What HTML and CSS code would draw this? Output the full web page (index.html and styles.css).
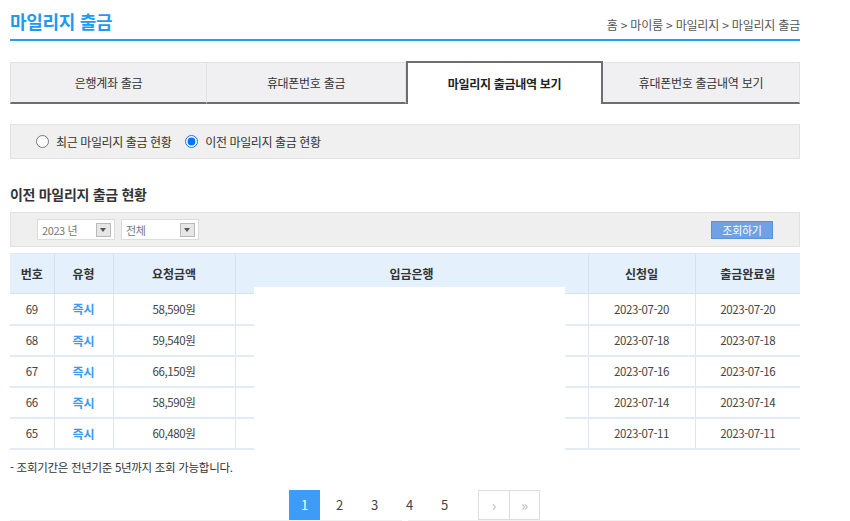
FILE: index.html
```html
<!DOCTYPE html>
<html lang="ko">
<head>
<meta charset="utf-8">
<title>마일리지 출금</title>
<link rel="stylesheet" href="styles.css">
</head>
<body>
<div class="page">
  <header class="top">
    <h1 class="title">마일리지 출금</h1>
    <div class="crumb">홈 &gt; 마이룸 &gt; 마일리지 &gt; 마일리지 출금</div>
  </header>

  <ul class="tabs">
    <li class="tab">은행계좌 출금</li>
    <li class="tab">휴대폰번호 출금</li>
    <li class="tab active">마일리지 출금내역 보기</li>
    <li class="tab">휴대폰번호 출금내역 보기</li>
  </ul>

  <div class="radios">
    <label class="radio"><input type="radio" name="period">최근 마일리지 출금 현황</label>
    <label class="radio"><input type="radio" name="period" checked>이전 마일리지 출금 현황</label>
  </div>

  <h2 class="section">이전 마일리지 출금 현황</h2>

  <div class="filter">
    <div class="sel"><span>2023 년</span><i class="arrow"></i></div>
    <div class="sel"><span>전체</span><i class="arrow"></i></div>
    <button class="search" type="button">조회하기</button>
  </div>

  <div class="table-wrap">
    <table class="list">
      <colgroup>
        <col class="c-no"><col class="c-type"><col class="c-amt"><col class="c-bank"><col class="c-req"><col class="c-done">
      </colgroup>
      <thead>
        <tr><th>번호</th><th>유형</th><th>요청금액</th><th>입금은행</th><th>신청일</th><th>출금완료일</th></tr>
      </thead>
      <tbody>
        <tr><td>69</td><td class="type">즉시</td><td>58,590원</td><td></td><td>2023-07-20</td><td>2023-07-20</td></tr>
        <tr><td>68</td><td class="type">즉시</td><td>59,540원</td><td></td><td>2023-07-18</td><td>2023-07-18</td></tr>
        <tr><td>67</td><td class="type">즉시</td><td>66,150원</td><td></td><td>2023-07-16</td><td>2023-07-16</td></tr>
        <tr><td>66</td><td class="type">즉시</td><td>58,590원</td><td></td><td>2023-07-14</td><td>2023-07-14</td></tr>
        <tr><td>65</td><td class="type">즉시</td><td>60,480원</td><td></td><td>2023-07-11</td><td>2023-07-11</td></tr>
      </tbody>
    </table>
    <div class="mask"></div>
  </div>

  <p class="note">- 조회기간은 전년기준 5년까지 조회 가능합니다.</p>

  <div class="paging">
    <span class="pg on">1</span>
    <span class="pg">2</span>
    <span class="pg">3</span>
    <span class="pg">4</span>
    <span class="pg">5</span>
    <span class="pg-box first">&#8250;</span>
    <span class="pg-box">&#187;</span>
  </div>

  <div class="bottom">
    <div class="bottom-box"></div>
    <div class="bottom-box"></div>
  </div>
</div>
</body>
</html>
```

FILE: styles.css
```css
* { box-sizing: border-box; }

html, body {
  margin: 0;
  padding: 0;
  background: #fff;
  overflow: hidden;
}

body {
  font-family: "Noto Sans CJK KR", "Noto Sans", sans-serif;
  color: #333;
  font-size: 12px;
}

.page {
  width: 790px;
  margin-left: 10px;
}

/* header */
.top {
  display: flex;
  justify-content: space-between;
  align-items: flex-end;
  height: 41px;
  padding-bottom: 6px;
  border-bottom: 2px solid #22a0f4;
}

.title {
  margin: 0;
  font-size: 18px;
  line-height: 24px;
  font-weight: 700;
  color: #1e9af0;
  letter-spacing: -0.3px;
}

.crumb {
  font-size: 12px;
  line-height: 16px;
  color: #555;
  letter-spacing: -0.2px;
}

/* tabs */
.tabs {
  list-style: none;
  margin: 20px 0 0;
  padding: 0;
  display: grid;
  grid-template-columns: 197px 199px 197px 197px;
  height: 42px;
  align-items: end;
}

.tab {
  height: 42px;
  display: flex;
  align-items: center;
  justify-content: center;
  background: #f0f0f2;
  border-top: 1px solid #e2e2e4;
  border-right: 1px solid #e2e2e4;
  border-bottom: 2px solid #6e6e6e;
  color: #333;
  font-size: 12px;
  letter-spacing: -0.3px;
}

.tab:first-child { border-left: 1px solid #e2e2e4; }

.tab.active {
  height: 43px;
  background: #fff;
  border: 2px solid #6e6e6e;
  border-bottom: none;
  font-weight: 700;
  color: #222;
}

/* radios */
.radios {
  margin-top: 21px;
  height: 35px;
  background: #f0f0f0;
  border: 1px solid #e2e2e2;
  display: flex;
  align-items: center;
  padding-left: 25px;
  gap: 14px;
}

.radio {
  display: flex;
  align-items: center;
  font-size: 12px;
  color: #333;
  letter-spacing: -0.4px;
}

.radio input {
  margin: 0 7px 0 0;
  width: 13px;
  height: 13px;
}

/* section heading */
.section {
  margin: 25px 0 0;
  font-size: 14px;
  line-height: 20px;
  font-weight: 700;
  color: #333;
  letter-spacing: -0.3px;
}

/* filter bar */
.filter {
  margin-top: 8px;
  height: 35px;
  background: #efefef;
  border: 1px solid #e2e2e2;
  display: flex;
  align-items: center;
  padding: 0 26px;
  gap: 6px;
}

.sel {
  width: 78px;
  height: 21px;
  background: #fff;
  border: 1px solid #dcdcdc;
  display: flex;
  align-items: center;
  justify-content: space-between;
  padding: 0 3px 0 4px;
  font-size: 11px;
  color: #777;
  letter-spacing: -0.4px;
}

.arrow {
  width: 15px;
  height: 14px;
  background: #e6e6e6;
  border: 1px solid #b9b9b9;
  position: relative;
}

.arrow::after {
  content: "";
  position: absolute;
  left: 3px;
  top: 4px;
  border-left: 3.5px solid transparent;
  border-right: 3.5px solid transparent;
  border-top: 4px solid #555;
}

.search {
  margin-left: auto;
  width: 62px;
  height: 18px;
  padding: 0;
  border: 1px solid #5b8fd8;
  background: #6ea1e6;
  color: #fff;
  font-family: "Noto Sans CJK KR", sans-serif;
  font-size: 11px;
  line-height: 16px;
  letter-spacing: -0.3px;
}

/* table */
.table-wrap {
  position: relative;
  margin-top: 6px;
}

.list {
  width: 790px;
  border-collapse: collapse;
  table-layout: fixed;
  border-top: 1px solid #d9e6f7;
}

.c-no { width: 44px; }
.c-type { width: 59px; }
.c-amt { width: 122px; }
.c-bank { width: 353px; }
.c-req { width: 107px; }
.c-done { width: 105px; }

.list th {
  height: 40px;
  background: #e5f0fd;
  font-size: 12px;
  font-weight: 700;
  color: #333;
  border-left: 1px solid #d5e2f3;
  border-bottom: 1px solid #d5e2f3;
  padding: 0;
}

.list td {
  height: 31px;
  text-align: center;
  font-size: 11.5px;
  color: #444;
  border-left: 1px solid #dce7f5;
  border-bottom: 2px solid #e2ebf7;
  padding: 0;
  letter-spacing: -0.4px;
}

.list th:first-child,
.list td:first-child { border-left: none; }

.list td.type {
  color: #3a9af2;
  font-weight: 700;
  font-size: 12px;
  letter-spacing: 0;
}

.mask {
  position: absolute;
  left: 244px;
  top: 34px;
  width: 311px;
  height: 164px;
  background: #fff;
}

/* note */
.note {
  margin: 9px 0 0;
  font-size: 11.5px;
  line-height: 16px;
  color: #333;
  letter-spacing: -0.3px;
}

/* pagination */
.paging {
  margin-top: 15px;
  display: flex;
  align-items: stretch;
  height: 30px;
  padding-left: 279px;
}

.pg {
  width: 31px;
  margin-right: 4px;
  display: flex;
  align-items: center;
  justify-content: center;
  font-size: 13px;
  color: #444;
}

.pg.on {
  background: #3f9cf6;
  color: #fff;
}

.pg-box {
  width: 31px;
  display: flex;
  align-items: center;
  justify-content: center;
  border: 1px solid #dddddd;
  color: #bbb;
  font-size: 15px;
}

.pg-box.first {
  margin-left: 14px;
  border-right: none;
}

/* bottom strips */
.bottom {
  display: flex;
  gap: 6px;
}

.bottom-box {
  flex: 1;
  height: 40px;
  background: #f0f0f0;
}
```
